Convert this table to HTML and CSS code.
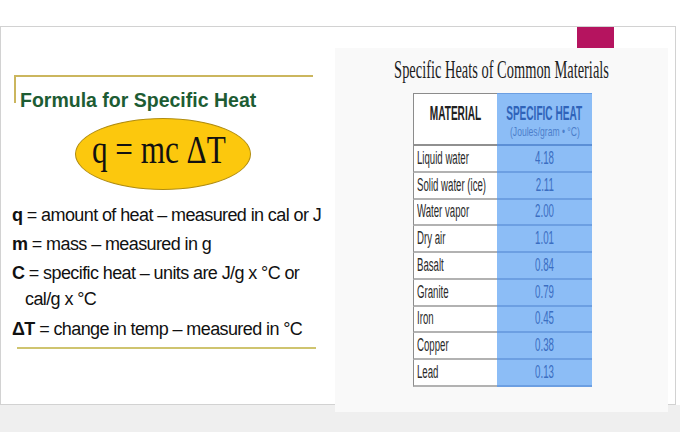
FILE: index.html
```html
<!DOCTYPE html>
<html>
<head>
<meta charset="utf-8">
<link rel="stylesheet" href="styles.css">
</head>
<body>
<div class="top"></div>
<div class="slide">
  <div class="left">
    <div class="frame"><h1 class="title">Formula for Specific Heat</h1></div>
    <div class="ellipse"><span class="formula">q = mc ΔT</span></div>
    <ul class="defs">
      <li><b>q</b> = amount of heat – measured in cal or J</li>
      <li><b>m</b> = mass – measured in g</li>
      <li><b>C</b> = specific heat – units are J/g x °C or<br>cal/g x °C</li>
      <li><b>ΔT</b> = change in temp – measured in °C</li>
    </ul>
    <div class="rule"></div>
  </div>
  <div class="right">
    <div class="tab-mark"></div>
    <div class="panel">
      <div class="ptitle"><span>Specific Heats of Common Materials</span></div>
      <div class="table">
        <div class="head-m"><span>MATERIAL</span></div>
        <div class="head-v"><span class="h1">SPECIFIC HEAT</span><span class="h2">(Joules/gram • °C)</span></div>
        <div class="cell-m"><span>Liquid water</span></div><div class="cell-v"><span>4.18</span></div>
        <div class="cell-m"><span>Solid water (ice)</span></div><div class="cell-v"><span>2.11</span></div>
        <div class="cell-m"><span>Water vapor</span></div><div class="cell-v"><span>2.00</span></div>
        <div class="cell-m"><span>Dry air</span></div><div class="cell-v"><span>1.01</span></div>
        <div class="cell-m"><span>Basalt</span></div><div class="cell-v"><span>0.84</span></div>
        <div class="cell-m"><span>Granite</span></div><div class="cell-v"><span>0.79</span></div>
        <div class="cell-m"><span>Iron</span></div><div class="cell-v"><span>0.45</span></div>
        <div class="cell-m"><span>Copper</span></div><div class="cell-v"><span>0.38</span></div>
        <div class="cell-m"><span>Lead</span></div><div class="cell-v"><span>0.13</span></div>
      </div>
    </div>
  </div>
</div>
<div class="footer"></div>
</body>
</html>
```
FILE: styles.css
```css
html, body {
  margin: 0;
  padding: 0;
}
body {
  width: 680px;
  height: 432px;
  overflow: hidden;
  background: #ffffff;
  font-family: "Liberation Sans", Arial, sans-serif;
}
.top {
  height: 26px;
}
.slide {
  display: flex;
  width: 676px;
  height: 379px;
  box-sizing: border-box;
  border: 1px solid #d2d2d2;
  background: #ffffff;
}
.left {
  width: 334px;
  flex: none;
}
.frame {
  margin: 48px 0 0 13px;
  width: 297px;
  height: 26px;
  border-top: 2px solid #cbb65e;
  border-left: 2px solid #cbb65e;
}
.title {
  margin: 12px 0 0 4px;
  font-size: 19.5px;
  line-height: 22px;
  font-weight: bold;
  color: #1d5c33;
  white-space: nowrap;
}
.ellipse {
  margin: 15px 0 0 74px;
  width: 176px;
  height: 72px;
  box-sizing: border-box;
  border: 1px solid #b08c10;
  border-radius: 50%;
  background: #fcc80d;
  display: flex;
  align-items: center;
  justify-content: center;
  padding: 0 8px 8px 0;
}
.formula {
  display: inline-block;
  font-family: "Liberation Serif", "Times New Roman", serif;
  font-size: 40px;
  line-height: 40px;
  transform: scaleX(0.78);
  white-space: nowrap;
  color: #111111;
}
.defs {
  list-style: none;
  margin: 12px 0 0 0;
  padding: 0 0 0 11px;
  font-size: 18px;
  line-height: 26px;
  letter-spacing: -0.6px;
  color: #111111;
}
.defs li {
  padding-left: 13px;
  text-indent: -13px;
  white-space: nowrap;
}
.defs li + li {
  margin-top: 3px;
}
.defs li:last-child {
  margin-top: 4px;
}
.rule {
  margin: 5px 0 0 16px;
  width: 299px;
  height: 2px;
  background: #cfc46f;
}
.right {
  width: 333px;
  flex: none;
}
.tab-mark {
  margin-left: 242px;
  width: 37px;
  height: 21px;
  background: #b5145f;
}
.panel {
  position: relative;
  height: 364px;
  background: #f9f9f9;
}
.ptitle {
  display: flex;
  justify-content: center;
  padding-top: 8px;
  height: 28px;
}
.ptitle span {
  font-family: "Liberation Serif", "Times New Roman", serif;
  font-size: 26px;
  line-height: 28px;
  transform: scaleX(0.555);
  white-space: nowrap;
  color: #1e1e1e;
}
.table {
  display: grid;
  grid-template-columns: 84px 95px;
  grid-template-rows: 53px repeat(9, 26.78px);
  margin: 9px 0 0 78px;
  width: 179px;
}
.head-m, .head-v, .cell-m, .cell-v {
  box-sizing: border-box;
}
.head-m {
  background: #ffffff;
  border-top: 1px solid #8c8c8c;
  border-left: 1px solid #8c8c8c;
  border-bottom: 2px solid #909090;
  display: flex;
  justify-content: center;
  padding-top: 7.7px;
}
.head-m span {
  font-size: 21px;
  line-height: 22px;
  height: 22px;
  font-weight: bold;
  transform: scaleX(0.48);
  white-space: nowrap;
  color: #222222;
}
.head-v {
  background: #8cbdf6;
  border-top: 1px solid #6c9fe2;
  border-bottom: 2px solid #5b8fd6;
  display: flex;
  flex-direction: column;
  align-items: center;
  padding-top: 7.7px;
}
.head-v .h1 {
  font-size: 21px;
  line-height: 22px;
  font-weight: bold;
  transform: scaleX(0.48);
  white-space: nowrap;
  color: #2f63b9;
}
.head-v .h2 {
  font-size: 13px;
  line-height: 16px;
  transform: scaleX(0.66);
  white-space: nowrap;
  color: #4c7fcb;
}
.cell-m {
  background: #ffffff;
  border-left: 1px solid #8c8c8c;
  border-bottom: 2px solid #b2b2b2;
  display: flex;
  align-items: center;
  padding-left: 3px;
}
.cell-m span {
  font-size: 18px;
  transform: scaleX(0.535);
  transform-origin: left center;
  white-space: nowrap;
  color: #2a2a2a;
}
.cell-v {
  background: #8cbdf6;
  border-bottom: 2px solid #6c9fe2;
  display: flex;
  align-items: center;
  justify-content: center;
}
.cell-v span {
  font-size: 18px;
  transform: scaleX(0.54);
  white-space: nowrap;
  color: #3b6ec2;
}
.footer {
  height: 27px;
  background: #efefef;
}
```
